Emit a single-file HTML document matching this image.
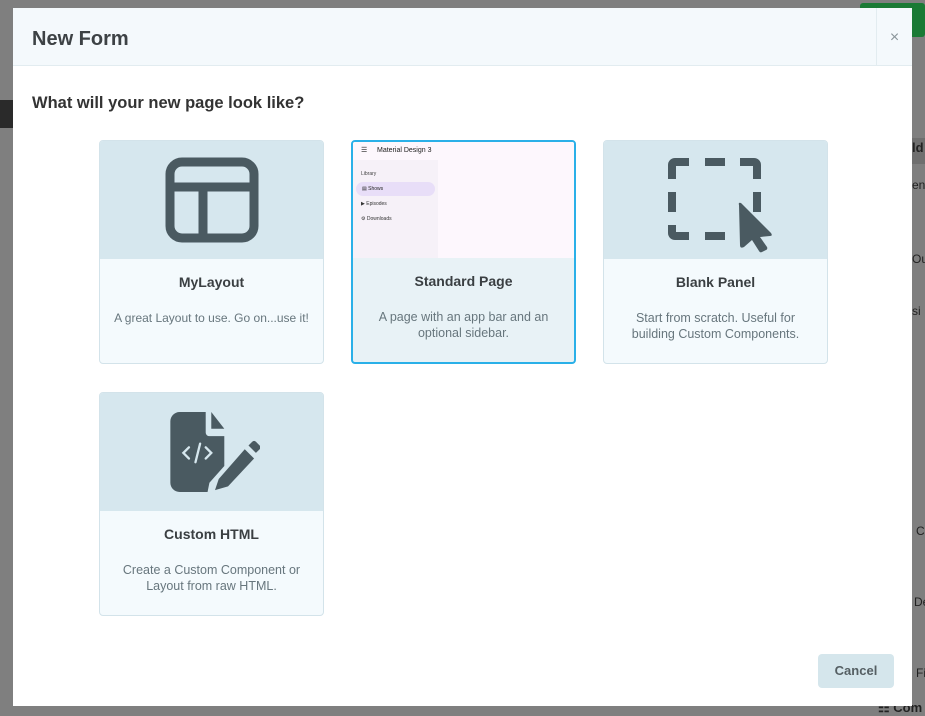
<!DOCTYPE html>
<html><head><style>
*{box-sizing:border-box;margin:0;padding:0}
body{width:925px;height:715px;background:#7f7f7f;font-family:"Liberation Sans",sans-serif;position:relative;overflow:hidden}
.bg{position:absolute}
.modal{position:absolute;left:13px;top:8px;width:899px;height:698px;background:#fff}
.hdr{height:58px;background:#f4f9fc;border-bottom:1px solid #e2ecf0;position:relative}
.hdr h1{position:absolute;left:19px;top:20px;font-size:20px;font-weight:bold;color:#3d4245}
.close{position:absolute;right:0;top:0;width:36px;height:58px;border-left:1px solid #e2ecf0;color:#8a959a;font-size:16px;text-align:center;line-height:60px}
h2{position:absolute;left:19px;top:86px;font-size:16.5px;font-weight:bold;color:#333}
.card{position:absolute;width:225px;height:224px;border:1px solid #d3e3ea;border-radius:4px;background:#f4fafd;overflow:hidden}
.card .img{height:118px;background:#d6e7ee;display:flex;align-items:center;justify-content:center;position:relative}
.card .t{text-align:center;font-weight:bold;font-size:14px;color:#3a3f42;margin-top:15px}
.card .d{text-align:center;font-size:12.5px;color:#67767d;line-height:16px;margin:20px 8px 0;white-space:nowrap}
.sel{border:2px solid #2ab0e8;background:#e8f2f6}
.btn{position:absolute;right:18px;top:646px;width:76px;height:34px;background:#d5e6ec;border-radius:4px;font-weight:bold;font-size:13px;color:#555f63;text-align:center;line-height:34px}
</style></head><body>
<div class="bg" style="left:0;top:100px;width:13px;height:28px;background:#2a2a2a"></div>
<div class="bg" style="left:860px;top:3px;width:65px;height:34px;background:#1a7a35;border-radius:3px"></div>
<div class="bg" style="left:912px;top:138px;width:13px;height:26px;background:#6f6f6f"></div>
<div class="bg" style="left:912px;top:140px;font-size:13px;font-weight:bold;color:#222">ld</div>
<div class="bg" style="left:912px;top:178px;font-size:12px;color:#222">en</div>
<div class="bg" style="left:912px;top:252px;font-size:12px;color:#222">Ou</div>
<div class="bg" style="left:912px;top:304px;font-size:12px;color:#222">si</div>
<div class="bg" style="left:916px;top:524px;font-size:12px;color:#222">C</div>
<div class="bg" style="left:914px;top:595px;font-size:12px;color:#222">De</div>
<div class="bg" style="left:916px;top:666px;font-size:12px;color:#222">Fi</div>
<div class="bg" style="left:878px;top:700px;font-size:13px;font-weight:bold;color:#222">⚏ Com</div>
<div class="modal">
<div class="hdr"><h1>New Form</h1><div class="close">×</div></div>
<h2>What will your new page look like?</h2>

<div class="card" style="left:86px;top:132px"><div class="img">
<svg width="94" height="86" viewBox="0 0 94 86"><rect x="5" y="5" width="84" height="76" rx="12" fill="none" stroke="#4a5a61" stroke-width="9"/><line x1="5" y1="30" x2="89" y2="30" stroke="#4a5a61" stroke-width="9"/><line x1="38" y1="30" x2="38" y2="81" stroke="#4a5a61" stroke-width="9"/></svg>
</div><div class="t">MyLayout</div><div class="d" style="font-size:12px">A great Layout to use. Go on...use it!</div></div>

<div class="card sel" style="left:338px;top:132px"><div class="img" style="background:#fdf7fd;display:block;height:116px">
<div style="position:absolute;left:8px;top:4px;font-size:7px;color:#222">☰&nbsp;&nbsp;&nbsp;&nbsp;&nbsp;Material Design 3</div>
<div style="position:absolute;left:0;top:18px;width:85px;height:98px;background:#f6f1f8">
<div style="font-size:5px;color:#444;margin:11px 0 0 8px">Library</div>
<div style="margin:5px 0 0 3px;width:79px;height:14px;border-radius:7px;background:#e8def8;font-size:5px;color:#222;line-height:14px;padding-left:6px">▤ Shows</div>
<div style="font-size:5px;color:#333;margin:5px 0 0 8px">▶ Episodes</div>
<div style="font-size:5px;color:#333;margin:9px 0 0 8px">⚙ Downloads</div>
</div></div><div class="t">Standard Page</div><div class="d" style="white-space:normal;margin:20px 14px 0">A page with an app bar and an optional sidebar.</div></div>

<div class="card" style="left:590px;top:132px"><div class="img" style="display:block">
<svg width="223" height="118" viewBox="0 0 223 118" style="position:absolute;left:0;top:0"><g fill="#4a5a61">
<path d="M64 38 V24 a7 7 0 0 1 7-7 H85 V25 H72 V38 Z"/>
<rect x="101" y="17" width="20" height="8"/>
<path d="M136 17 H150 a7 7 0 0 1 7 7 V38 H149 V25 H136Z"/>
<rect x="64" y="51" width="8" height="20"/>
<rect x="149" y="51" width="8" height="20"/>
<path d="M64 84 V92 a7 7 0 0 0 7 7 H85 V91 H72 V84Z"/>
<rect x="101" y="91" width="20" height="8"/>
<path d="M135 64 Q134 61 137 62 L167 92 Q169 95 166 95 L156 96 L163 106 Q164 108 162 109 L158 111 Q156 112 155 110 L148 99 L140 106 Q136 108 136 104 Z"/>
</g></svg>
</div><div class="t">Blank Panel</div><div class="d" style="white-space:normal;margin:20px 14px 0">Start from scratch. Useful for building Custom Components.</div></div>

<div class="card" style="left:86px;top:384px"><div class="img">
<svg width="90" height="80" viewBox="0 0 96 86" style="margin-left:6px"><g fill="#4a5a61">
<path d="M10 0 H38 V22 a4 4 0 0 0 4 4 H58 V58 L42 76 L40 86 H10 a10 10 0 0 1-10-10 V10 A10 10 0 0 1 10 0Z"/>
<path d="M44 0 L58 18 H44Z"/>
<path d="M52 72 L80 40 L90 50 L62 80 L48 84Z"/><path d="M84 36 L88 32 a3 3 0 0 1 4 0 L96 36 a3 3 0 0 1 0 4 L92 44Z"/></g>
<g stroke="#d6e7ee" stroke-width="2.5" fill="none" stroke-linecap="round"><path d="M20 38 L14 44 L20 50"/><path d="M38 38 L44 44 L38 50"/><path d="M32 34 L27 54"/></g></svg>
</div><div class="t">Custom HTML</div><div class="d" style="white-space:normal;margin:20px 14px 0">Create a Custom Component or Layout from raw HTML.</div></div>

<div class="btn">Cancel</div>
</div>
</body></html>
